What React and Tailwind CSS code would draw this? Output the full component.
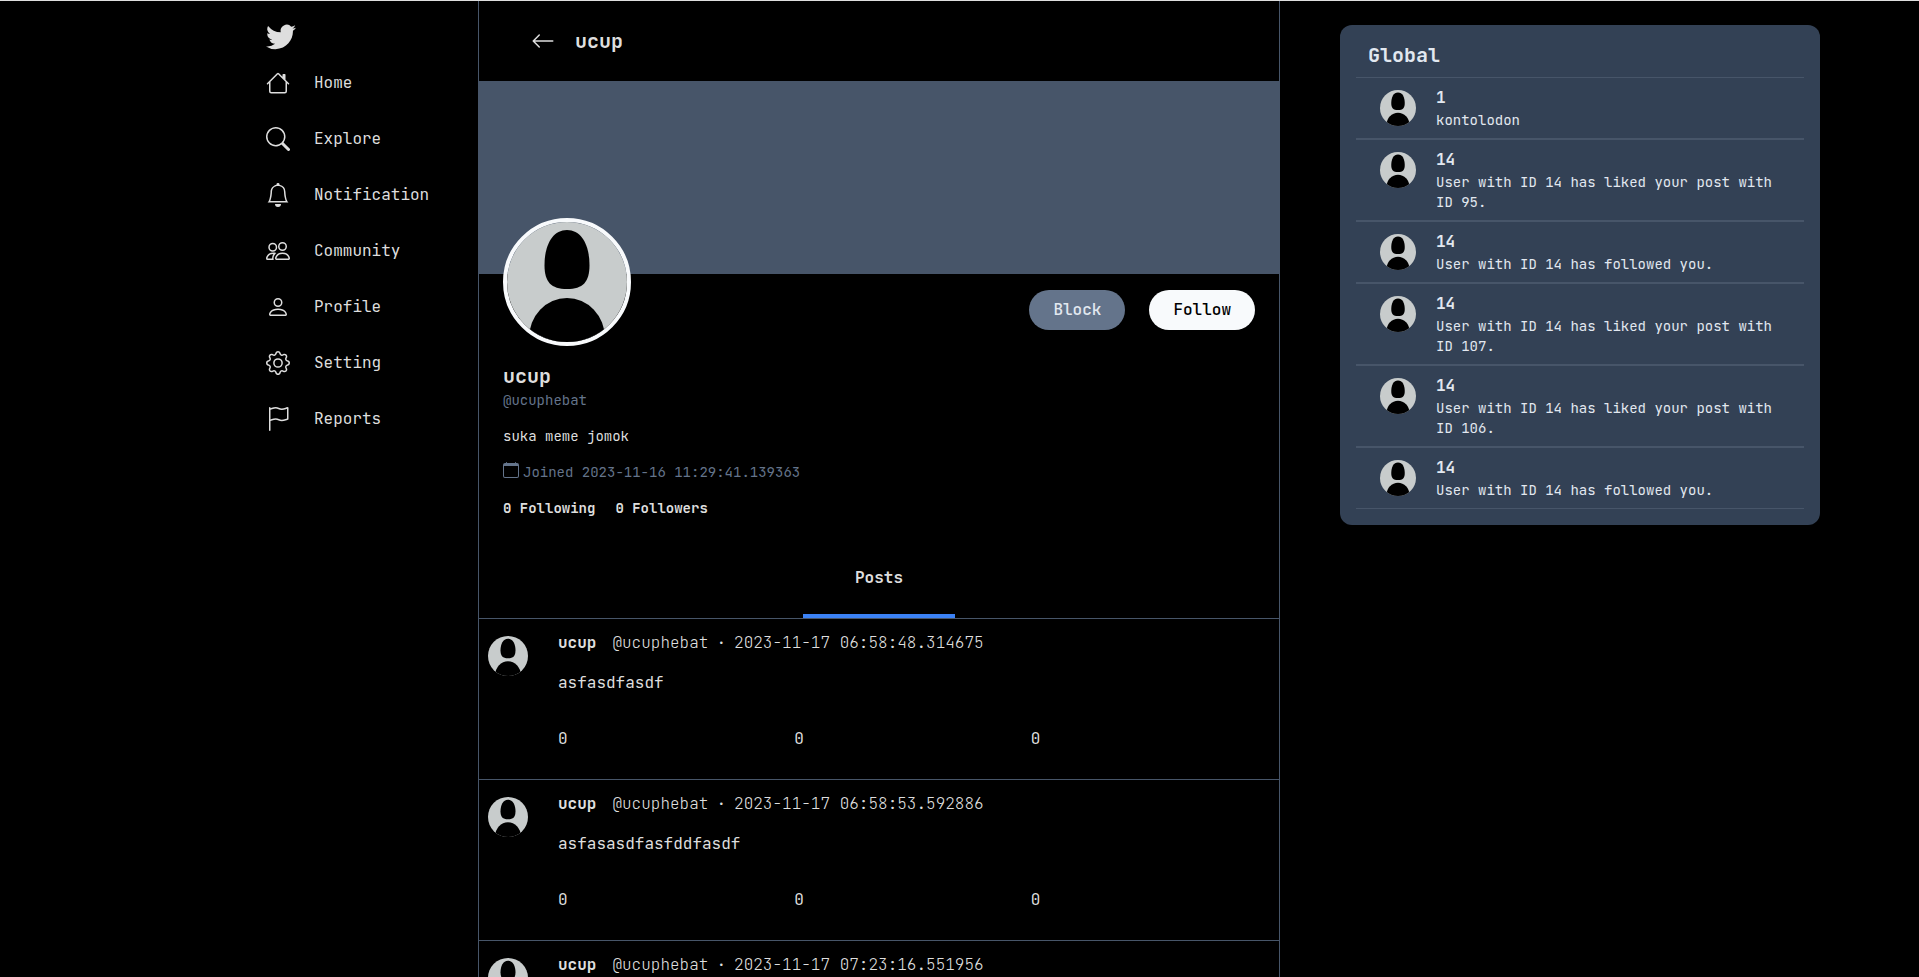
import {
  BsArrowLeft,
  BsBell,
  BsCalendar,
  BsFlag,
  BsGear,
  BsHouse,
  BsPeople,
  BsPerson,
  BsSearch,
  BsTwitter,
} from "react-icons/bs";

const NAV_ITEMS = [
  { label: "Home", icon: BsHouse },
  { label: "Explore", icon: BsSearch },
  { label: "Notification", icon: BsBell },
  { label: "Community", icon: BsPeople },
  { label: "Profile", icon: BsPerson },
  { label: "Setting", icon: BsGear },
  { label: "Reports", icon: BsFlag },
];

const NOTIFICATIONS = [
  { from: "1", text: "kontolodon" },
  { from: "14", text: "User with ID 14 has liked your post with ID 95." },
  { from: "14", text: "User with ID 14 has followed you." },
  { from: "14", text: "User with ID 14 has liked your post with ID 107." },
  { from: "14", text: "User with ID 14 has liked your post with ID 106." },
  { from: "14", text: "User with ID 14 has followed you." },
];

const POSTS = [
  { date: "2023-11-17 06:58:48.314675", text: "asfasdfasdf" },
  { date: "2023-11-17 06:58:53.592886", text: "asfasasdfasfddfasdf" },
  { date: "2023-11-17 07:23:16.551956", text: "asfasdf" },
];

function Avatar({ className }) {
  return (
    <svg viewBox="0 0 120 120" aria-hidden="true" className={`shrink-0 rounded-full ${className}`}>
      <rect width="120" height="120" fill="#c8cccc" />
      <path d="M60 8C75 8 82.500 24 82.500 43C82.500 60 76 67 60 67C44 67 37.500 60 37.500 43C37.500 24 45 8 60 8Z" fill="#000" />
      <ellipse cx="60" cy="116" rx="38" ry="40" fill="#000" />
    </svg>
  );
}

function Sidebar() {
  return (
    <aside className="flex justify-end">
      <div className="w-[212px] pt-5">
        <a href="#home" aria-label="Twitter" className="block w-fit">
          <BsTwitter className="size-[30px]" />
        </a>
        <nav className="mt-1 flex flex-col">
          {NAV_ITEMS.map(({ label, icon: Icon }) => (
            <a key={label} href={`#${label.toLowerCase()}`} className="flex h-14 items-center gap-6">
              <Icon className="size-6 shrink-0" />
              <span>{label}</span>
            </a>
          ))}
        </nav>
      </div>
    </aside>
  );
}

function Profile() {
  return (
    <section className="px-6 pt-4 pb-4">
      <div className="flex items-start justify-between">
        <Avatar className="relative -mt-[72px] size-32 border-4 border-[#f8fafc]" />
        <div className="flex gap-6">
          <button type="button" className="h-10 rounded-full bg-[#64748b] px-6 font-medium text-[#e2e8f0]">
            Block
          </button>
          <button type="button" className="h-10 rounded-full bg-[#f8fafc] px-6 font-medium text-black">
            Follow
          </button>
        </div>
      </div>
      <h2 className="mt-4 text-xl leading-7 font-bold">ucup</h2>
      <div className="flex flex-col gap-4 text-sm leading-5">
        <p className="text-[#64748b]">@ucuphebat</p>
        <p>suka meme jomok</p>
        <p className="flex items-start gap-1 text-[#64748b]">
          <BsCalendar className="size-4" />
          <span>Joined 2023-11-16 11:29:41.139363</span>
        </p>
        <p className="flex gap-5 font-bold">
          <span>0 Following</span>
          <span>0 Followers</span>
        </p>
      </div>
    </section>
  );
}

function Post({ date, text }) {
  return (
    <article className="flex gap-[30px] border-b border-[#475569] pt-3 pr-3 pb-7 pl-[9px]">
      <Avatar className="mt-[5px] size-10" />
      <div className="flex-1">
        <header className="flex font-extralight">
          <h3 className="mr-4 font-bold">ucup</h3>
          <span>@ucuphebat</span>
          <span className="mx-2">·</span>
          <time>{date}</time>
        </header>
        <p className="mt-4">{text}</p>
        <div className="mt-8 grid grid-cols-3">
          <button type="button" aria-label="Comments" className="text-left">0</button>
          <button type="button" aria-label="Reposts" className="text-left">0</button>
          <button type="button" aria-label="Likes" className="text-left">0</button>
        </div>
      </div>
    </article>
  );
}

function GlobalPanel() {
  return (
    <aside>
      <section className="mt-6 ml-[60px] max-w-[480px] rounded-xl bg-[#334155] p-4 text-[#e2e8f0]">
        <h2 className="px-3 pb-2 text-xl leading-7 font-bold">Global</h2>
        <ul>
          {NOTIFICATIONS.map(({ from, text }, i) => (
            <li key={i} className="flex gap-5 border-y border-[#475569] px-6 py-2">
              <Avatar className="mt-1 size-9" />
              <div>
                <h3 className="font-bold">{from}</h3>
                <p className="text-sm leading-5">{text}</p>
              </div>
            </li>
          ))}
        </ul>
      </section>
    </aside>
  );
}

export default function App() {
  return (
    <div className="grid h-screen grid-cols-[478fr_802fr_639fr] overflow-hidden border-t border-[#dedede] bg-black font-['JetBrains_Mono','DejaVu_Sans_Mono',monospace] text-base leading-6 text-[#dedede]">
      <Sidebar />
      <main className="min-w-0 overflow-y-auto border-x border-[#475569] [scrollbar-width:none]">
        <header className="flex h-[81px] items-center gap-5 border-b border-[#475569] pl-[52px]">
          <button type="button" aria-label="Back">
            <BsArrowLeft className="size-6" />
          </button>
          <h1 className="text-xl leading-7 font-bold">ucup</h1>
        </header>
        <div className="h-48 bg-[#475569]" />
        <Profile />
        <div className="flex justify-center border-b border-[#475569]">
          <button type="button" className="border-b-4 border-[#3b82f6] px-[52px] pt-8 pb-6 font-bold">
            Posts
          </button>
        </div>
        {POSTS.map((post) => (
          <Post key={post.date} {...post} />
        ))}
      </main>
      <GlobalPanel />
    </div>
  );
}
